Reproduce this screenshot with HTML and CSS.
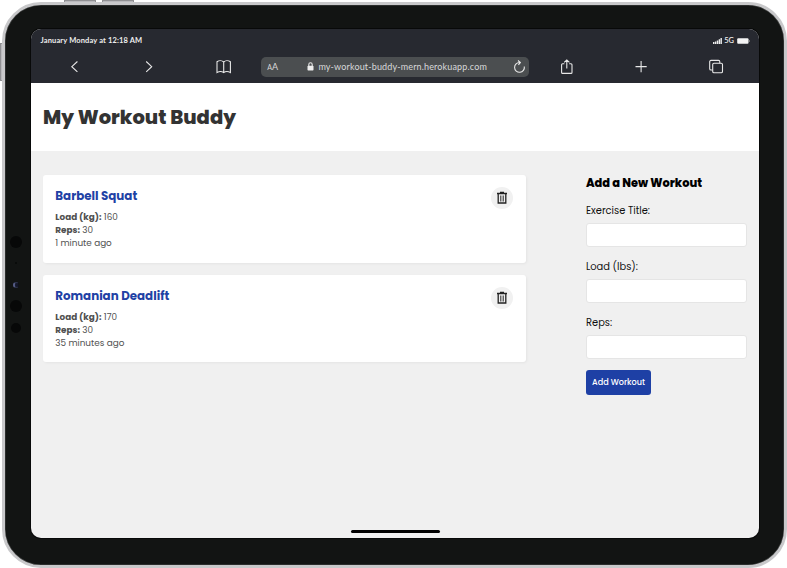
FILE: index.html
```html
<!DOCTYPE html>
<html lang="en">
<head>
<meta charset="utf-8">
<title>My Workout Buddy</title>
<link rel="stylesheet" href="styles.css">
</head>
<body>
<i class="key key-a"></i><i class="key key-b"></i><i class="key key-c"></i>
<div class="device">
  <i class="dot d1"></i><i class="dot d2"></i><i class="dot d3"></i><i class="dot d4"></i><i class="dot d5"></i>
  <div class="screen">
    <div class="chrome">
      <div class="status">
        <span class="date">January Monday at 12:18 AM</span>
        <span class="signal">
          <svg width="9" height="6" viewBox="0 0 9 6" fill="#eee"><path d="M0 4h1.4v2H0zM1.9 3.4h1.4V6H1.9zM3.8 2.4h1.4V6H3.8zM5.7 1.2h1.4V6H5.7zM7.5 0h1.4v6H7.5z"/></svg>
          <span class="net">5G</span>
          <svg width="13" height="6" viewBox="0 0 13 6"><rect x=".2" y=".2" width="11.3" height="5.6" rx="1" fill="#f4f4f4"/><path d="M12.2 2v2" stroke="#aaa" stroke-width=".8"/></svg>
        </span>
      </div>
      <div class="tools">
        <div class="group">
          <svg width="16" height="16" viewBox="0 0 16 16"><path d="M10.400 2.500 4.800 7.700l5.600 5.200"/></svg>
          <svg width="16" height="16" viewBox="0 0 16 16"><path d="m5.200 2.500 5.500 5.200-5.500 5.200"/></svg>
          <svg width="16" height="16" viewBox="0 0 16 16"><path d="M7.700 3C6 1.300 3 1.300 1 2.800v10.800c2-1.200 5-1.200 6.700 0 1.700-1.200 4.700-1.200 6.700 0V2.800C12.400 1.300 9.400 1.300 7.700 3zv10.600"/></svg>
        </div>
        <div class="address">
          <span class="aa"><small>A</small>A</span>
          <span class="url"><svg width="7" height="9" viewBox="0 0 7 9"><rect x=".5" y="3.700" width="6" height="4.800" rx=".7" fill="#eee" stroke="none"/><path d="M1.800 4V2.400a1.700 1.700 0 0 1 3.400 0V4"/></svg><span class="host">my-workout-buddy-mern.herokuapp.com</span></span>
          <svg width="13" height="14" viewBox="0 0 13 14"><path d="M11.300 6.500A4.900 4.900 0 1 1 6.800 2.500M5 .5l2.400 2-2 2.300"/></svg>
        </div>
        <div class="group">
          <svg width="16" height="16" viewBox="0 0 16 16"><path d="M5.400 4.800H3.600a1 1 0 0 0-1 1v7.600a1 1 0 0 0 1 1h8.400a1 1 0 0 0 1-1V5.800a1 1 0 0 0-1-1h-1.800M7.800 9.500V.9M5.200 3.400 7.800.9l2.600 2.500"/></svg>
          <svg width="16" height="16" viewBox="0 0 16 16"><path d="M2.500 7.600h11.200M8.100 2v11.200"/></svg>
          <svg width="16" height="16" viewBox="0 0 16 16"><rect x="4.700" y="4.300" width="9.800" height="9.500" rx="1.300"/><path d="M4.500 11H3a1.300 1.300 0 0 1-1.300-1.300V2.700A1.300 1.300 0 0 1 3 1.400h7.500a1.300 1.300 0 0 1 1.300 1.300v1.500"/></svg>
        </div>
      </div>
    </div>
    <header><h1>My Workout Buddy</h1></header>
    <main>
      <section class="workouts">
        <article>
          <div><h4>Barbell Squat</h4>
          <p><strong>Load (kg):</strong> <span>160</span></p>
          <p><strong>Reps:</strong> <span>30</span></p>
          <p>1 minute ago</p></div>
          <button class="trash" aria-label="Delete"><svg width="12" height="14" viewBox="0 0 12 14"><path d="M1 2.500h10M4 1.500h4M2.200 3v9h7.600V3" stroke="#222" stroke-width="1.300" fill="none"/><path d="M4.800 4.500v6M7.200 4.500v6" stroke="#333" stroke-width="1.100"/></svg></button>
        </article>
        <article>
          <div><h4>Romanian Deadlift</h4>
          <p><strong>Load (kg):</strong> <span>170</span></p>
          <p><strong>Reps:</strong> <span>30</span></p>
          <p>35 minutes ago</p></div>
          <button class="trash" aria-label="Delete"><svg width="12" height="14" viewBox="0 0 12 14"><path d="M1 2.500h10M4 1.500h4M2.200 3v9h7.600V3" stroke="#222" stroke-width="1.300" fill="none"/><path d="M4.800 4.500v6M7.200 4.500v6" stroke="#333" stroke-width="1.100"/></svg></button>
        </article>
      </section>
      <form>
        <h3>Add a New Workout</h3>
        <label for="t">Exercise Title:</label><input id="t">
        <label for="l">Load (lbs):</label><input id="l">
        <label for="r">Reps:</label><input id="r">
        <button type="button" class="add">Add Workout</button>
      </form>
    </main>
    <i class="home"></i>
  </div>
</div>
</body>
</html>
```
FILE: styles.css
```css
* { box-sizing: border-box; margin: 0; padding: 0; }
body { width: 787px; height: 568px; overflow: hidden; background: #fff; padding: 2px 0 0 2px; font-family: Poppins, Inter, sans-serif; position: relative; }
.device { position: relative; width: 785px; height: 566px; border-radius: 39px; background: #121413; border: 3px solid #c8c8ca; padding: 24px 0 0 26px; box-shadow: inset 0 0 0 .5px #454746; }
.key { position: absolute; background: #b8b8bb; border: 1px solid #909093; }
.key-a { left: 64px; top: 0; width: 32px; height: 3px; }
.key-b { left: 102px; top: 0; width: 32px; height: 3px; }
.key-c { left: 0; top: 43px; width: 3px; height: 38px; }
.dot { position: absolute; border-radius: 50%; background: #070808; }
.d1 { left: 5px; top: 231px; width: 12px; height: 12px; }
.d2 { left: 10px; top: 257px; width: 2px; height: 2px; }
.d3 { left: 8px; top: 277px; width: 6px; height: 6px; background: #15182a; border: 1px solid #30354f; border-left: 2px solid #555c85; border-right-color: #10121a; }
.d4 { left: 5px; top: 295px; width: 12px; height: 12px; }
.d5 { left: 6px; top: 318px; width: 10px; height: 10px; }
.screen { position: relative; width: 728px; height: 508.500px; background: #f0f0f0; border-radius: 10px; overflow: hidden; box-shadow: 0 0 0 1px #080909; }
.chrome { height: 54px; background: #272930; color: #eee; font-family: Lato, sans-serif; }
.status { height: 22px; display: flex; justify-content: space-between; align-items: center; padding: 0 9.500px 0 9.500px; font-size: 7.500px; font-weight: 700; }
.date { letter-spacing: .14px; }
.signal { display: flex; align-items: center; gap: 2.500px; padding-top: 1px; }
.net { font-size: 7.500px; font-weight: 600; }
.tools { height: 31px; padding: 0 35px 0 35.500px; display: flex; align-items: center; justify-content: space-between; }
.group { display: flex; gap: 58.600px; }
.tools svg { fill: none; stroke: #e8e8e8; stroke-width: 1.100; flex: none; }
.address { width: 268px; height: 20px; background: #4b4e50; border-radius: 5px; display: flex; align-items: center; justify-content: space-between; padding: 0 3px 0 6px; color: #d8d9da; font-size: 9px; }
.aa small { font-size: 7px; }
.url { display: flex; align-items: center; gap: 4px; margin-left: 3px; }
.host { letter-spacing: .15px; }
header { height: 68px; background: #fff; display: flex; align-items: center; padding: 1px 0 0 12px; }
h1 { font-size: 19.500px; line-height: 29px; font-weight: 800; color: #333; white-space: nowrap; }
main { display: flex; justify-content: space-between; padding: 24px 12px 0; }
.workouts { width: 482.500px; display: grid; gap: 12px; align-content: start; }
article { height: 87.500px; background: #fff; border-radius: 3px; box-shadow: 1px 1px 3px rgba(0,0,0,.05); padding: 12px 13px 12px 12.300px; display: flex; justify-content: space-between; }
h4 { font-size: 11.850px; line-height: 18px; font-weight: 700; color: #1f42a5; margin-bottom: 6px; white-space: nowrap; }
p { font-size: 8.850px; line-height: 13.200px; color: #505050; white-space: nowrap; }
p strong { font-weight: 700; }
.trash { width: 22px; height: 22px; border: 0; border-radius: 50%; background: #f1f1f1; display: grid; place-items: center; }
form { width: 161px; }
h3 { font-size: 11.400px; line-height: 16px; font-weight: 800; color: #000; margin-bottom: 12px; white-space: nowrap; }
label { display: block; font-size: 9.900px; line-height: 14px; color: #111; margin-bottom: 6px; padding-top: 1px; height: 14px; }
input { display: block; width: 161px; height: 24px; border: 1px solid #e5e5e5; border-radius: 3px; background: #fff; margin-bottom: 11.800px; }
.add { display: block; width: 65px; height: 24.500px; margin-top: -.3px; border: 0; border-radius: 3px; background: #1e40a5; color: #fff; font: 500 8.100px Poppins, Inter, sans-serif; white-space: nowrap; }
.home { position: absolute; left: 319.500px; bottom: 5px; width: 89px; height: 3px; border-radius: 2px; background: #000; }
```
